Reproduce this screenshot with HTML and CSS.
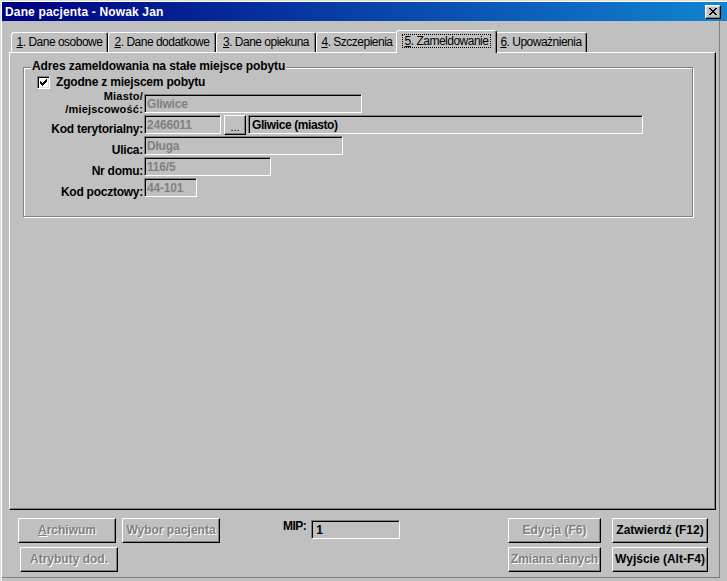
FILE: index.html
```html
<!DOCTYPE html>
<html lang="pl">
<head>
<meta charset="utf-8">
<title>Dane pacjenta - Nowak Jan</title>
<link rel="stylesheet" href="styles.css">
</head>
<body>
<div class="window">
  <div class="titlebar">
    <span class="title">Dane pacjenta - Nowak Jan</span>
    <span class="close-btn"><svg width="8" height="7" viewBox="0 0 8 7" shape-rendering="crispEdges"><path fill="#000" d="M0 0h2v1H0zM6 0h2v1H6zM1 1h2v1H1zM5 1h2v1H5zM2 2h4v1H2zM3 3h2v1H3zM2 4h4v1H2zM1 5h2v1H1zM5 5h2v1H5zM0 6h2v1H0zM6 6h2v1H6z"/></svg></span>
  </div>
  <div class="client">
    <div class="tabs">
      <div class="tab t1"><u>1</u>. Dane osobowe</div>
      <div class="tab t2"><u>2</u>. Dane dodatkowe</div>
      <div class="tab t3"><u>3</u>. Dane opiekuna</div>
      <div class="tab t4"><u>4</u>. Szczepienia</div>
      <div class="tab t5 active"><span class="focus"><u>5</u>. Zameldowanie</span></div>
      <div class="tab t6"><u>6</u>. Upoważnienia</div>
    </div>
    <div class="panel">
      <div class="group">
        <div class="legend">Adres zameldowania na stałe miejsce pobytu</div>
        <div class="check-row">
          <span class="checkbox"><svg width="7" height="7" viewBox="0 0 7 7" shape-rendering="crispEdges"><path fill="#000" d="M6 0h1v1H6zM5 1h2v1H5zM0 2h1v1H0zM4 2h3v1H4zM0 3h2v1H0zM3 3h3v1H3zM0 4h5v1H0zM1 5h3v1H1zM2 6h1v1H2z"/></svg></span>
          <span class="check-label">Zgodne z miejscem pobytu</span>
        </div>
        <div class="form">
          <div class="label two">Miasto/<br>/miejscowość:</div>
          <div class="field"><span class="input w-city">Gliwice</span></div>
          <div class="label">Kod terytorialny:</div>
          <div class="field">
            <span class="input w-code">2466011</span>
            <span class="btn dots">...</span>
            <span class="input w-name enabled">Gliwice (miasto)</span>
          </div>
          <div class="label">Ulica:</div>
          <div class="field"><span class="input w-street">Długa</span></div>
          <div class="label">Nr domu:</div>
          <div class="field"><span class="input w-house">116/5</span></div>
          <div class="label">Kod pocztowy:</div>
          <div class="field"><span class="input w-zip">44-101</span></div>
        </div>
      </div>
    </div>
    <div class="footer">
      <div class="footer-left">
        <div class="btn-row">
          <span class="btn big disabled"><u>A</u>rchiwum</span>
          <span class="btn big disabled">Wybor pacjenta</span>
        </div>
        <div class="btn-row second">
          <span class="btn big disabled">Atrybuty dod.</span>
        </div>
      </div>
      <div class="mip">
        <span class="mip-label">MIP:</span>
        <span class="input w-mip enabled">1</span>
      </div>
      <div class="footer-right">
        <span class="btn big disabled">Edycja (F6)</span>
        <span class="btn big">Zatwierdź (F12)</span>
        <span class="btn big disabled">Zmiana danych</span>
        <span class="btn big">Wyjście (Alt-F4)</span>
      </div>
    </div>
  </div>
</div>
</body>
</html>
```

FILE: styles.css
```css
* { box-sizing: border-box; }
html, body { margin: 0; padding: 0; }
body {
  background: #c0c0c0;
  font-family: "Liberation Sans", Arial, sans-serif;
  font-size: 12px;
  color: #000;
}
.window {
  width: 727px;
  height: 581px;
  background: #c0c0c0;
  border-top: 1px solid #dfdfdf;
  border-left: 1px solid #dfdfdf;
  padding: 1px 0 0 1px;
  box-shadow: inset 1px 1px 0 #fff;
  display: flex;
  flex-direction: column;
  overflow: hidden;
}
.titlebar {
  height: 19px;
  flex: none;
  display: flex;
  align-items: center;
  padding: 0 6px 0 3px;
  background: linear-gradient(90deg, #000080, #1084d0);
}
.title {
  color: #fff;
  font-weight: bold;
  font-size: 12px;
  letter-spacing: 0.15px;
}
.close-btn {
  margin-left: auto;
  width: 16px;
  height: 14px;
  background: #c0c0c0;
  border: 1px solid;
  border-color: #fff #000 #000 #fff;
  box-shadow: inset -1px -1px 0 #808080, inset 1px 1px 0 #dfdfdf;
  display: flex;
  align-items: center;
  justify-content: center;
}
.close-btn svg { display: block; margin: 0 1px 0 0; }
.client {
  width: 718px;
  height: 557px;
  flex: none;
  border-right: 1px solid #808080;
  border-bottom: 1px solid #808080;
  padding: 9px 0 0 7px;
}
.tabs {
  height: 22px;
  display: flex;
  align-items: flex-end;
  padding-left: 2px;
  position: relative;
  z-index: 1;
}
.tab {
  height: 20px;
  flex: none;
  border: 1px solid;
  border-bottom: none;
  border-color: #fff #000 transparent #fff;
  border-radius: 3px 3px 0 0;
  box-shadow: inset -1px 0 0 #808080;
  text-align: center;
  line-height: 19px;
  letter-spacing: -0.5px;
  white-space: nowrap;
  background: #c0c0c0;
}
.t1 { width: 97px; }
.t2 { width: 108px; }
.t3 { width: 100px; }
.t4 { width: 82px; }
.t5 { width: 97px; }
.t6 { width: 92px; }
.tab.active {
  width: 101px;
  height: 23px;
  margin: 0 -2px -1px;
  position: relative;
  z-index: 2;
  padding-top: 3px;
  line-height: 12px;
}
.focus {
  display: inline-block;
  border: 1px dotted #000;
  padding: 0 2px;
  line-height: 12px;
}
.panel {
  width: 707px;
  height: 458px;
  border: 1px solid;
  border-color: #fff #000 #000 #fff;
  box-shadow: inset -1px -1px 0 #808080;
  padding-top: 14px;
  padding-left: 13px;
}
.group {
  width: 670px;
  height: 150px;
  border: 1px solid #808080;
  box-shadow: inset 1px 1px 0 #fff, 1px 1px 0 #fff;
}
.legend {
  width: fit-content;
  height: 14px;
  line-height: 14px;
  margin: -9px 0 0 7px;
  padding: 0 1px;
  background: #c0c0c0;
  font-weight: bold;
  letter-spacing: -0.1px;
  white-space: nowrap;
}
.check-row {
  margin-top: 3px;
  height: 13px;
  display: flex;
  align-items: center;
}
.checkbox {
  width: 13px;
  height: 13px;
  margin-left: 13px;
  background: #fff;
  border: 1px solid;
  border-color: #808080 #fff #fff #808080;
  box-shadow: inset 1px 1px 0 #000, inset -1px -1px 0 #dfdfdf;
  display: flex;
  padding: 2px 0 0 2px;
}
.checkbox svg { display: block; }
.check-label {
  margin-left: 6px;
  font-weight: bold;
  letter-spacing: -0.2px;
  line-height: 13px;
  white-space: nowrap;
}
.form {
  margin-top: 5px;
  display: grid;
  grid-template-columns: 120px auto;
  grid-auto-rows: 19px;
  row-gap: 2px;
}
.label {
  align-self: end;
  text-align: right;
  font-weight: bold;
  letter-spacing: -0.25px;
  line-height: 13px;
  margin-bottom: -2px;
  padding-right: 1px;
  white-space: nowrap;
}
.label.two {
  font-size: 11px;
  letter-spacing: 0.2px;
  line-height: 12.5px;
  margin-bottom: -2px;
}
.field {
  display: flex;
  align-items: flex-start;
}
.input {
  display: block;
  height: 19px;
  border: 1px solid;
  border-color: #808080 #fff #fff #808080;
  box-shadow: inset 1px 1px 0 #000;
  padding: 1px 0 0 2px;
  line-height: 16px;
  font-weight: bold;
  letter-spacing: -0.2px;
  color: #808080;
  white-space: nowrap;
  overflow: hidden;
  flex: none;
}
.input.enabled { color: #000; }
.w-city { width: 218px; }
.w-code { width: 77px; }
.w-name { width: 395px; margin-left: 2px; padding-left: 3px; letter-spacing: -0.4px; }
.w-street { width: 199px; }
.w-house { width: 127px; }
.w-zip { width: 53px; }
.w-mip { width: 89px; margin-left: 5px; margin-top: 2px; padding-left: 4px; }
.btn {
  display: block;
  flex: none;
  background: #c0c0c0;
  border: 1px solid;
  border-color: #fff #000 #000 #fff;
  box-shadow: inset -1px -1px 0 #808080;
  text-align: center;
  font-weight: bold;
  white-space: nowrap;
}
.btn.dots {
  width: 22px;
  height: 20px;
  margin-left: 3px;
  line-height: 22px;
  font-size: 11px;
  font-weight: normal;
  color: #000;
}
.btn.big {
  height: 25px;
  line-height: 23px;
}
.btn.disabled {
  color: #808080;
  text-shadow: 1px 1px 0 #fff;
}
.footer {
  margin-top: 8px;
  padding: 0 11px 0 9px;
  display: flex;
  align-items: flex-start;
}
.footer-left {
  width: 202px;
  flex: none;
}
.btn-row {
  display: flex;
  gap: 6px;
}
.btn-row .btn { width: 98px; }
.btn-row.second {
  margin-top: 4px;
  padding-left: 2px;
}
.mip {
  margin-left: 63px;
  display: flex;
  align-items: flex-start;
}
.mip-label {
  font-weight: bold;
  letter-spacing: -0.5px;
  line-height: 13px;
  margin-top: 2px;
}
.footer-right {
  margin-left: auto;
  display: grid;
  grid-template-columns: 93px 96px;
  column-gap: 11px;
  row-gap: 4px;
}
```
